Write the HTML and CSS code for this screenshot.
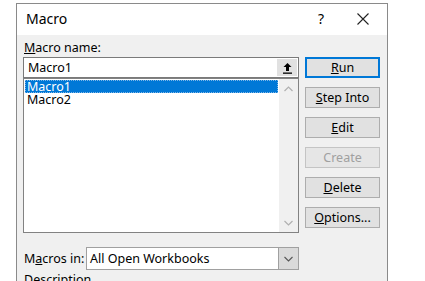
FILE: index.html
```html
<!DOCTYPE html>
<html lang="en">
<head>
  <meta charset="UTF-8" />
  <title>Macro</title>
  <link rel="stylesheet" href="styles.css">
</head>
<body>
  <div class="dialog">
    <div class="titlebar">
      <span class="title">Macro</span>
      <span class="help">?</span>
      <span class="close">
        <svg width="12" height="12" viewBox="0 0 12 12"><path d="M0.5 0.5 L11.5 11.5 M11.5 0.5 L0.5 11.5" stroke="#222" stroke-width="1.1" fill="none"/></svg>
      </span>
    </div>
    <div class="content">
      <div class="left">
        <div class="label"><u>M</u>acro name:</div>
        <div class="namebox">
          <span class="nametext">Macro1</span>
          <span class="upbtn">
            <svg width="11" height="12" viewBox="0 0 11 12"><path d="M5.5 1 L1.5 5 H4 V9 H7 V5 H9.5 Z" fill="#000"/><rect x="1" y="10.5" width="9" height="1.3" fill="#000"/></svg>
          </span>
        </div>
        <div class="listbox">
          <div class="items">
            <div class="item selected">Macro1</div>
            <div class="item">Macro2</div>
          </div>
          <div class="scrollbar">
            <svg width="9" height="6" viewBox="0 0 9 6"><path d="M0.5 5 L4.5 1 L8.5 5" stroke="#b0b0b0" stroke-width="1.2" fill="none"/></svg>
            <svg width="9" height="6" viewBox="0 0 9 6"><path d="M0.5 1 L4.5 5 L8.5 1" stroke="#b0b0b0" stroke-width="1.2" fill="none"/></svg>
          </div>
        </div>
        <div class="inrow">
          <span class="inlabel">M<u>a</u>cros in:</span>
          <div class="select">
            <span class="seltext">All Open Workbooks</span>
            <span class="selbtn">
              <svg width="9" height="6" viewBox="0 0 9 6"><path d="M0.5 1 L4.5 5 L8.5 1" stroke="#555" stroke-width="1.1" fill="none"/></svg>
            </span>
          </div>
        </div>
        <div class="desc">Description</div>
      </div>
      <div class="right">
        <button class="btn default"><u>R</u>un</button>
        <button class="btn"><u>S</u>tep Into</button>
        <button class="btn"><u>E</u>dit</button>
        <button class="btn disabled">Create</button>
        <button class="btn"><u>D</u>elete</button>
        <button class="btn"><u>O</u>ptions...</button>
      </div>
    </div>
  </div>
</body>
</html>
```

FILE: styles.css
```css
body {
  margin: 0;
  background: #fff;
  font-family: "Noto Sans", "Open Sans", sans-serif;
  font-size: 12.5px;
  color: #000;
  overflow: hidden;
}
.dialog {
  margin: 3px 0 0 16px;
  width: 370px;
  height: 300px;
  border: 1px solid #8a8a8a;
  background: #f0f0f0;
}
.titlebar {
  height: 31px;
  background: #fff;
  display: flex;
  align-items: center;
  padding-left: 9px;
  padding-bottom: 2px;
  box-sizing: border-box;
}
.title {
  font-size: 14px;
  flex: 1;
}
.help {
  font-size: 14px;
  width: 39px;
}
.close {
  width: 30px;
  display: flex;
}
.content {
  display: flex;
  padding: 4px 0 0 6px;
}
.left {
  width: 276px;
}
.label {
  height: 18px;
  padding-left: 1px;
}
.namebox {
  height: 19px;
  border: 1px solid #7a7a7a;
  background: #fff;
  display: flex;
  align-items: center;
}
.nametext {
  flex: 1;
  padding-left: 4px;
}
.upbtn {
  width: 20px;
  height: 17px;
  margin-right: 1px;
  background: #e1e1e1;
  display: flex;
  align-items: center;
  justify-content: center;
}
.listbox {
  height: 153px;
  border: 1px solid #828282;
  background: #fff;
  display: flex;
}
.items {
  flex: 1;
  padding: 1px 0 0 1px;
}
.item {
  height: 13px;
  line-height: 13px;
  padding-left: 2px;
}
.selected {
  background: #0078d7;
  color: #fff;
  outline: 1px dotted #7fb7e8;
  outline-offset: -1px;
  margin-right: 1px;
}
.scrollbar {
  width: 19px;
  background: #f0f0f0;
  display: flex;
  flex-direction: column;
  justify-content: space-between;
  align-items: center;
  padding: 7px 0 6px;
}
.inrow {
  display: flex;
  align-items: center;
  margin-top: 14px;
}
.inlabel {
  width: 62px;
  padding-left: 1px;
}
.select {
  flex: 1;
  height: 21px;
  border: 1px solid #a0a0a0;
  background: #fff;
  display: flex;
  align-items: center;
}
.seltext {
  flex: 1;
  padding-left: 3px;
}
.selbtn {
  width: 19px;
  height: 21px;
  background: #dadada;
  border-left: 1px solid #a0a0a0;
  display: flex;
  align-items: center;
  justify-content: center;
}
.desc {
  margin-top: 1px;
  padding-left: 1px;
}
.right {
  display: flex;
  flex-direction: column;
  gap: 9px;
  margin-left: 6px;
  padding-top: 18px;
}
.btn {
  width: 75px;
  height: 21px;
  font-family: inherit;
  font-size: 12.5px;
  background: #e1e1e1;
  border: 1px solid #adadad;
  padding: 0;
  color: #000;
}
.btn.default {
  border: 2px solid #0078d7;
}
.btn.disabled {
  color: #a0a0a0;
  border-color: #c4c4c4;
  background: #e6e6e6;
}
```
